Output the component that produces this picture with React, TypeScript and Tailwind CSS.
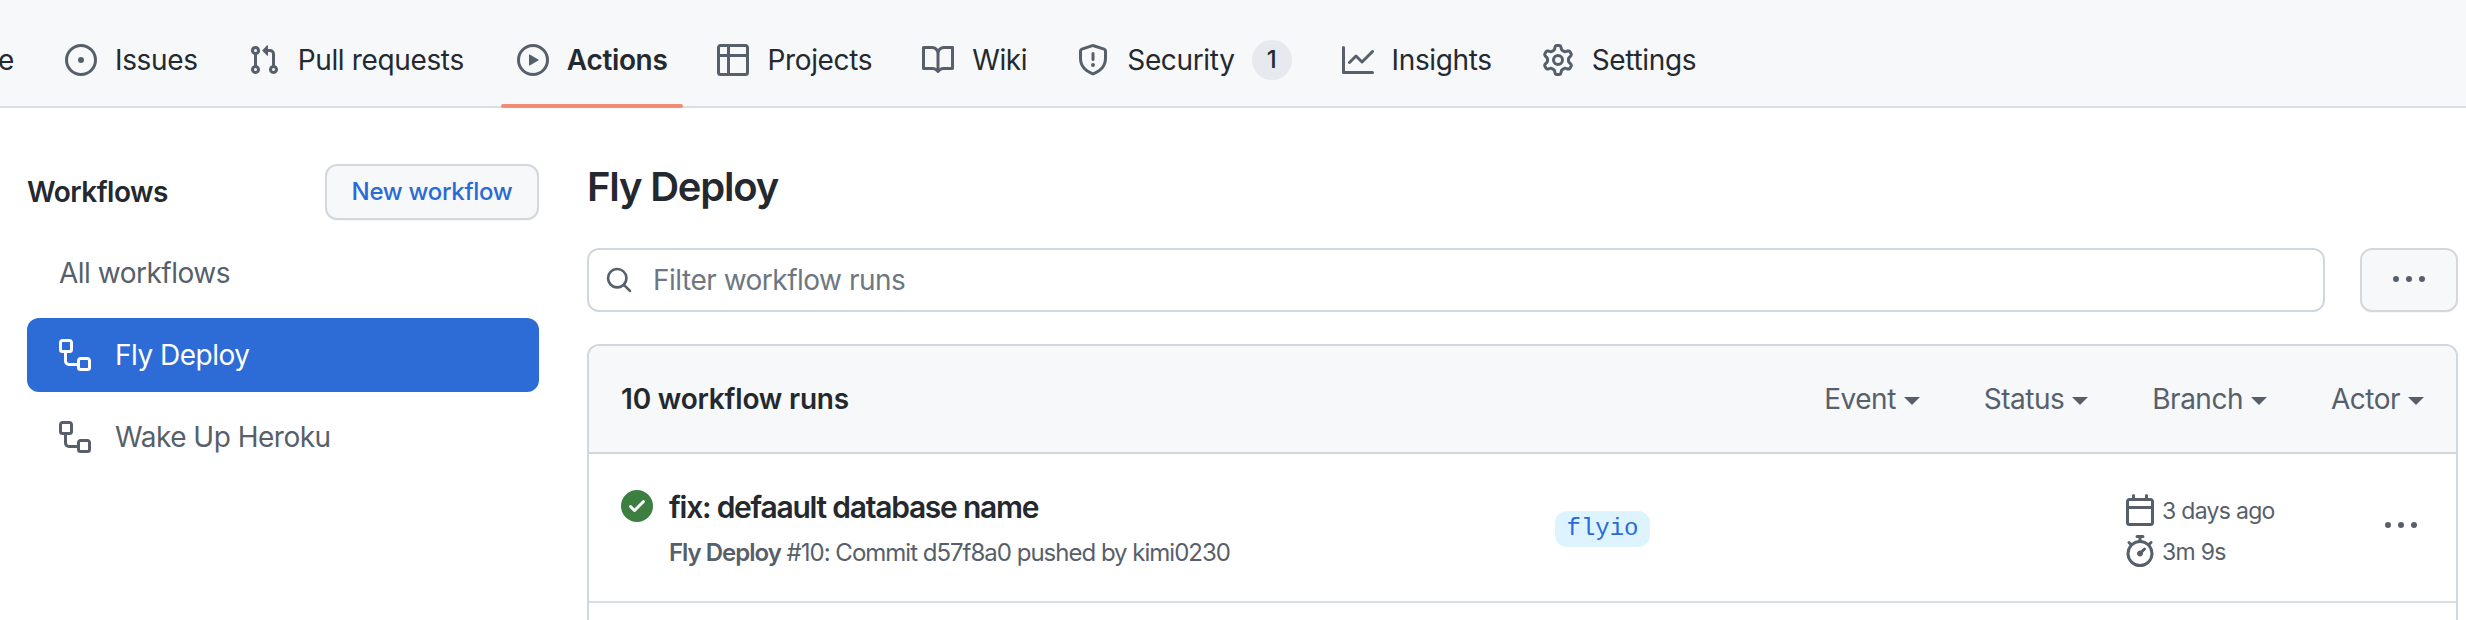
type IconProps = {
  d: string;
  className?: string;
};

const icons = {
  issue:
    "M8 9.5a1.5 1.5 0 1 0 0-3 1.5 1.5 0 0 0 0 3Z M8 0a8 8 0 1 1 0 16A8 8 0 0 1 8 0ZM1.5 8a6.5 6.5 0 1 0 13 0 6.5 6.5 0 0 0-13 0Z",
  pull:
    "M1.5 3.25a2.25 2.25 0 1 1 3 2.122v5.256a2.251 2.251 0 1 1-1.5 0V5.372A2.25 2.25 0 0 1 1.5 3.25Zm5.677-.177L9.573.677A.25.25 0 0 1 10 .854V2.5h1A2.5 2.5 0 0 1 13.5 5v5.628a2.251 2.251 0 1 1-1.5 0V5a1 1 0 0 0-1-1h-1v1.646a.25.25 0 0 1-.427.177L7.177 3.427a.25.25 0 0 1 0-.354ZM3.75 2.5a.75.75 0 1 0 0 1.5.75.75 0 0 0 0-1.5Zm0 9.5a.75.75 0 1 0 0 1.5.75.75 0 0 0 0-1.5Zm8.25.75a.75.75 0 1 0 1.5 0 .75.75 0 0 0-1.5 0Z",
  play:
    "M8 0a8 8 0 1 1 0 16A8 8 0 0 1 8 0ZM1.5 8a6.5 6.5 0 1 0 13 0 6.5 6.5 0 0 0-13 0Zm4.879-2.773 4.264 2.559a.25.25 0 0 1 0 .428l-4.264 2.559A.25.25 0 0 1 6 10.559V5.442a.25.25 0 0 1 .379-.215Z",
  table:
    "M0 1.75C0 .784.784 0 1.75 0h12.5C15.216 0 16 .784 16 1.75v12.5A1.75 1.75 0 0 1 14.25 16H1.75A1.75 1.75 0 0 1 0 14.25ZM6.5 6.5v8h7.75a.25.25 0 0 0 .25-.25V6.5Zm8-1.5V1.75a.25.25 0 0 0-.25-.25H6.5V5Zm-13 1.5v7.75c0 .138.112.25.25.25H5v-8ZM5 5V1.5H1.75a.25.25 0 0 0-.25.25V5Z",
  book:
    "M0 1.75A.75.75 0 0 1 .75 1h4.253c1.227 0 2.317.59 3 1.501A3.743 3.743 0 0 1 11.006 1h4.245a.75.75 0 0 1 .75.75v10.5a.75.75 0 0 1-.75.75h-4.507a2.25 2.25 0 0 0-1.591.659l-.622.621a.75.75 0 0 1-1.06 0l-.622-.621A2.25 2.25 0 0 0 5.258 13H.75a.75.75 0 0 1-.75-.75Zm7.251 10.324.004-5.073-.002-2.253A2.25 2.25 0 0 0 5.003 2.5H1.5v9h3.757a3.75 3.75 0 0 1 1.994.574ZM8.755 4.75l-.004 7.322a3.752 3.752 0 0 1 1.992-.572H14.5v-9h-3.495a2.25 2.25 0 0 0-2.25 2.25Z",
  shield:
    "M7.467.133a1.748 1.748 0 0 1 1.066 0l5.25 1.68A1.75 1.75 0 0 1 15 3.48V7c0 1.566-.32 3.182-1.303 4.682-.983 1.498-2.585 2.813-5.032 3.855a1.697 1.697 0 0 1-1.33 0c-2.447-1.042-4.049-2.357-5.032-3.855C1.32 10.182 1 8.566 1 7V3.48a1.75 1.75 0 0 1 1.217-1.667Zm.61 1.429a.25.25 0 0 0-.153 0l-5.25 1.68a.25.25 0 0 0-.174.238V7c0 1.358.275 2.666 1.057 3.86.784 1.194 2.121 2.34 4.366 3.297a.196.196 0 0 0 .154 0c2.245-.956 3.582-2.104 4.366-3.298C13.225 9.666 13.5 8.36 13.5 7V3.48a.251.251 0 0 0-.174-.237l-5.25-1.68ZM8.75 4.75v3a.75.75 0 0 1-1.5 0v-3a.75.75 0 0 1 1.5 0ZM9 10.5a1 1 0 1 1-2 0 1 1 0 0 1 2 0Z",
  graph:
    "M1.5 1.75V13.5h13.75a.75.75 0 0 1 0 1.5H.75a.75.75 0 0 1-.75-.75V1.75a.75.75 0 0 1 1.5 0Zm14.28 2.53-5.25 5.25a.75.75 0 0 1-1.06 0L7 7.06 4.28 9.78a.751.751 0 0 1-1.042-.018.751.751 0 0 1-.018-1.042l3.25-3.25a.75.75 0 0 1 1.06 0L10 7.94l4.72-4.72a.751.751 0 0 1 1.042.018.751.751 0 0 1 .018 1.042Z",
  gear:
    "M8 0a8.2 8.2 0 0 1 .701.031C9.444.095 9.99.645 10.16 1.29l.288 1.107c.018.066.079.158.212.224.231.114.454.243.668.386.123.082.233.09.299.071l1.103-.303c.644-.176 1.392.021 1.82.63.27.385.506.792.704 1.218.315.675.111 1.422-.364 1.891l-.814.806c-.049.048-.098.147-.088.294.016.257.016.515 0 .772-.01.147.038.246.088.294l.814.806c.475.469.679 1.216.364 1.891a7.977 7.977 0 0 1-.704 1.217c-.428.61-1.176.807-1.82.63l-1.102-.302c-.067-.019-.177-.011-.3.071a5.909 5.909 0 0 1-.668.386c-.133.066-.194.158-.211.224l-.29 1.106c-.168.646-.715 1.196-1.458 1.26a8.006 8.006 0 0 1-1.402 0c-.743-.064-1.289-.614-1.458-1.26l-.289-1.106c-.018-.066-.079-.158-.212-.224a5.738 5.738 0 0 1-.668-.386c-.123-.082-.233-.09-.299-.071l-1.103.303c-.644.176-1.392-.021-1.82-.63a8.12 8.12 0 0 1-.704-1.218c-.315-.675-.111-1.422.363-1.891l.815-.806c.05-.048.098-.147.088-.294a6.214 6.214 0 0 1 0-.772c.01-.147-.038-.246-.088-.294l-.815-.806C.635 6.045.431 5.298.746 4.623a7.92 7.92 0 0 1 .704-1.217c.428-.61 1.176-.807 1.82-.63l1.102.302c.067.019.177.011.3-.071.214-.143.437-.272.668-.386.133-.066.194-.158.211-.224l.29-1.106C6.009.645 6.556.095 7.299.03 7.53.01 7.764 0 8 0Zm-.571 1.525c-.036.003-.108.036-.137.146l-.289 1.105c-.147.561-.549.967-.998 1.189-.173.086-.34.183-.5.29-.417.278-.97.423-1.529.27l-1.103-.303c-.109-.03-.175.016-.195.045-.22.312-.412.644-.573.99-.014.031-.021.11.059.19l.815.806c.411.406.562.957.53 1.456a4.709 4.709 0 0 0 0 .582c.032.499-.119 1.05-.53 1.456l-.815.806c-.081.08-.073.159-.059.19.162.346.353.677.573.989.02.03.085.076.195.046l1.102-.303c.56-.153 1.113-.008 1.53.27.161.107.328.204.501.29.447.222.85.629.997 1.189l.289 1.105c.029.109.101.143.137.146a6.6 6.6 0 0 0 1.142 0c.036-.003.108-.036.137-.146l.289-1.105c.147-.561.549-.967.998-1.189.173-.086.34-.183.5-.29.417-.278.97-.423 1.529-.27l1.103.303c.109.029.175-.016.195-.045.22-.313.411-.644.573-.99.014-.031.021-.11-.059-.19l-.815-.806c-.411-.406-.562-.957-.53-1.456a4.709 4.709 0 0 0 0-.582c-.032-.499.119-1.05.53-1.456l.815-.806c.081-.08.073-.159.059-.19a6.464 6.464 0 0 0-.573-.989c-.02-.03-.085-.076-.195-.046l-1.102.303c-.56.153-1.113.008-1.53-.27a4.44 4.44 0 0 0-.501-.29c-.447-.222-.85-.629-.997-1.189l-.289-1.105c-.029-.11-.101-.143-.137-.146a6.6 6.6 0 0 0-1.142 0ZM11 8a3 3 0 1 1-6 0 3 3 0 0 1 6 0ZM9.5 8a1.5 1.5 0 1 0-3.001.001A1.5 1.5 0 0 0 9.5 8Z",
  workflow:
    "M0 1.75C0 .784.784 0 1.75 0h3.5C6.216 0 7 .784 7 1.75v3.5A1.75 1.75 0 0 1 5.25 7H4v4a1 1 0 0 0 1 1h4v-1.25C9 9.784 9.784 9 10.75 9h3.5c.966 0 1.75.784 1.75 1.75v3.5A1.75 1.75 0 0 1 14.25 16h-3.5A1.75 1.75 0 0 1 9 14.25v-.75H5A2.5 2.5 0 0 1 2.5 11V7h-.75A1.75 1.75 0 0 1 0 5.25Zm1.75-.25a.25.25 0 0 0-.25.25v3.5c0 .138.112.25.25.25h3.5a.25.25 0 0 0 .25-.25v-3.5a.25.25 0 0 0-.25-.25Zm9 9a.25.25 0 0 0-.25.25v3.5c0 .138.112.25.25.25h3.5a.25.25 0 0 0 .25-.25v-3.5a.25.25 0 0 0-.25-.25Z",
  search:
    "M10.68 11.74a6 6 0 0 1-7.922-8.982 6 6 0 0 1 8.982 7.922l3.04 3.04a.749.749 0 0 1-.326 1.275.749.749 0 0 1-.734-.215ZM11.5 7a4.499 4.499 0 1 0-8.997 0A4.499 4.499 0 0 0 11.5 7Z",
  kebab:
    "M8 9a1.5 1.5 0 1 0 0-3 1.5 1.5 0 0 0 0 3ZM1.5 9a1.5 1.5 0 1 0 0-3 1.5 1.5 0 0 0 0 3Zm13 0a1.5 1.5 0 1 0 0-3 1.5 1.5 0 0 0 0 3Z",
  check:
    "M8 16A8 8 0 1 1 8 0a8 8 0 0 1 0 16Zm3.78-9.72a.751.751 0 0 0-.018-1.042.751.751 0 0 0-1.042-.018L6.75 9.19 5.28 7.72a.751.751 0 0 0-1.042.018.751.751 0 0 0-.018 1.042l2 2a.75.75 0 0 0 1.06 0Z",
  calendar:
    "M4.75 0a.75.75 0 0 1 .75.75V2h5V.75a.75.75 0 0 1 1.5 0V2h1.25c.966 0 1.75.784 1.75 1.75v10.5A1.75 1.75 0 0 1 13.25 16H2.75A1.75 1.75 0 0 1 1 14.25V3.75C1 2.784 1.784 2 2.75 2H4V.75A.75.75 0 0 1 4.75 0ZM2.5 7.5v6.75c0 .138.112.25.25.25h10.5a.25.25 0 0 0 .25-.25V7.5Zm10.75-4H2.75a.25.25 0 0 0-.25.25V6h11V3.75a.25.25 0 0 0-.25-.25Z",
  stopwatch:
    "M5.75.75A.75.75 0 0 1 6.5 0h3a.75.75 0 0 1 0 1.5h-.75v1l-.001.041a6.724 6.724 0 0 1 3.464 1.435l.007-.006.75-.75a.749.749 0 0 1 1.275.326.749.749 0 0 1-.215.734l-.75.75-.006.007a6.75 6.75 0 1 1-10.548 0L2.72 5.03l-.75-.75a.751.751 0 0 1 .018-1.042.751.751 0 0 1 1.042-.018l.75.75.007.006A6.72 6.72 0 0 1 7.25 2.541V1.5H6.5a.75.75 0 0 1-.75-.75ZM8 14.5a5.25 5.25 0 1 0-.001-10.501A5.25 5.25 0 0 0 8 14.5Zm.389-6.7 1.33-1.33a.75.75 0 1 1 1.061 1.06L9.45 8.861A1.503 1.503 0 0 1 8 10.75a1.499 1.499 0 1 1 .389-2.95Z",
};

const Icon = ({ d, className = "w-8 h-8 fill-[#57606a]" }: IconProps) => (
  <svg viewBox="0 0 16 16" className={`shrink-0 ${className}`}>
    <path d={d} fillRule="evenodd" />
  </svg>
);

const tabs = [
  { label: "Issues", icon: icons.issue },
  { label: "Pull requests", icon: icons.pull },
  { label: "Actions", icon: icons.play, active: true },
  { label: "Projects", icon: icons.table },
  { label: "Wiki", icon: icons.book },
  { label: "Security", icon: icons.shield, count: 1 },
  { label: "Insights", icon: icons.graph },
  { label: "Settings", icon: icons.gear },
];

const filters = ["Event", "Status", "Branch", "Actor"];

const TabBar = () => (
  <nav className="h-[108px] shrink-0 flex items-stretch gap-[18px] bg-[#f6f8fa] border-b-2 border-[#d8dee4] pt-[14px] pl-[15px] text-[28px] text-[#24292f] tracking-[-0.35px]">
    <span className="-ml-[85px] mr-[17px] w-[84px] text-right flex items-center justify-end">Code</span>
    {tabs.map((tab) => (
      <a
        key={tab.label}
        className={`relative flex items-center gap-[18px] px-4 ${tab.active ? "font-semibold ml-[3px]" : ""}`}
      >
        <Icon d={tab.icon} />
        <span>{tab.label}</span>
        {tab.count && (
          <span className="-ml-[1px] w-10 h-10 rounded-full bg-[#e6eaef] flex items-center justify-center text-[24px] font-medium">
            {tab.count}
          </span>
        )}
        {tab.active && (
          <span className="absolute left-0 right-0 bottom-[-2px] h-[4px] rounded-sm bg-[#f08d74]" />
        )}
      </a>
    ))}
  </nav>
);

const Sidebar = () => (
  <aside className="w-[512px] shrink-0 text-[28px] tracking-[-0.5px]">
    <div className="flex items-center justify-between h-14">
      <h2 className="font-semibold text-[#24292f]">Workflows</h2>
      <button className="w-[214px] h-14 rounded-xl border-2 border-[#d4d8dd] bg-[#f6f8fa] shadow-[0_1px_0_rgba(27,31,36,0.04)] text-[24px] font-medium text-[#2a6ad6] tracking-[-0.3px]">
        New workflow
      </button>
    </div>
    <div className="mt-[16px] flex flex-col gap-2">
      <a className="h-[74px] px-8 flex items-center text-[#57606a]">All workflows</a>
      <a className="h-[74px] px-8 flex items-center gap-[24px] rounded-xl bg-[#2d6cd6] text-white">
        <Icon d={icons.workflow} className="w-8 h-8 fill-white" />
        Fly Deploy
      </a>
      <a className="h-[74px] px-8 flex items-center gap-[24px] text-[#57606a]">
        <Icon d={icons.workflow} />
        Wake Up Heroku
      </a>
    </div>
  </aside>
);

const RunRow = () => (
  <div className="h-[149px] flex items-start border-b-2 border-[#d8dee4]">
    <div className="w-[966px] pl-[32px] pt-[36px] flex gap-4 shrink-0">
      <Icon d={icons.check} className="w-8 h-8 fill-[#3c7f41]" />
      <div>
        <div className="text-[30px] leading-[34px] font-semibold text-[#24292f] tracking-[-1.25px]">
          fix: defaault database name
        </div>
        <div className="mt-[14px] text-[24px] leading-[30px] text-[#57606a] tracking-[-1px]">
          <span className="font-semibold">Fly Deploy</span> #10: Commit d57f8a0 pushed by kimi0230
        </div>
      </div>
    </div>
    <div className="w-[569px] shrink-0 pt-[57px]">
      <span className="inline-flex items-center h-9 w-[95px] justify-center rounded-xl bg-[#ddf4ff] text-[#2a6ad6] text-[24px] font-['Liberation_Mono',monospace]">
        flyio
      </span>
    </div>
    <div className="w-[261px] shrink-0 pt-[40px] text-[23px] text-[#57606a] tracking-[-0.7px]">
      <div className="flex items-center gap-[6px] h-8">
        <Icon d={icons.calendar} className="w-8 h-8 fill-[#57606a]" />
        <span className="mt-[3px]">3 days ago</span>
      </div>
      <div className="flex items-center gap-[6px] h-8 mt-[9px]">
        <Icon d={icons.stopwatch} className="w-8 h-8 fill-[#57606a]" />
        <span className="mt-[3px]">3m 9s</span>
      </div>
    </div>
    <div className="pt-[56px]">
      <Icon d={icons.kebab} className="w-8 h-8 fill-[#57606a]" />
    </div>
  </div>
);

const Main = () => (
  <main className="flex-1 min-w-0">
    <h1 className="h-[48px] -mt-[1px] text-[40px] leading-[48px] font-semibold text-[#24292f] tracking-[-1.2px]">
      Fly Deploy
    </h1>
    <div className="mt-[37px] flex gap-[35px]">
      <div className="flex-1 h-16 rounded-xl border-2 border-[#d0d7de] bg-white flex items-center pl-[16px] gap-[20px]">
        <Icon d={icons.search} className="w-[28px] h-[28px] fill-[#57606a]" />
        <span className="text-[28px] text-[#6e7781] tracking-[-0.5px]">Filter workflow runs</span>
      </div>
      <button className="w-[98px] h-16 rounded-xl border-2 border-[#d4d8dd] bg-[#f6f8fa] shadow-[0_1px_0_rgba(27,31,36,0.04)] flex items-center justify-center">
        <Icon d={icons.kebab} className="w-8 h-8 fill-[#57606a]" />
      </button>
    </div>
    <section className="mt-[32px] rounded-t-xl border-x-2 border-t-2 border-[#d0d7de]">
      <div className="h-[108px] rounded-t-[10px] bg-[#f6f8fa] border-b-2 border-[#d0d7de] flex items-center pl-[32px] pr-[32px] text-[#57606a]">
        <h3 className="text-[28px] font-semibold text-[#24292f] tracking-[-0.2px] mr-auto">10 workflow runs</h3>
        <div className="flex gap-[64px] text-[28px] tracking-[-0.5px]">
          {filters.map((f) => (
            <span key={f} className="flex items-center gap-[8px]">
              {f}
              <span className="mt-[4px] border-x-[8px] border-t-[8px] border-x-transparent border-t-[#57606a]" />
            </span>
          ))}
        </div>
      </div>
      <RunRow />
      <div className="h-24" />
    </section>
  </main>
);

export default function App() {
  return (
    <div className="h-[620px] overflow-hidden bg-white flex flex-col font-['Inter',sans-serif]">
      <TabBar />
      <div className="flex gap-12 pl-[27px] pr-2 pt-14">
        <Sidebar />
        <Main />
      </div>
    </div>
  );
}
